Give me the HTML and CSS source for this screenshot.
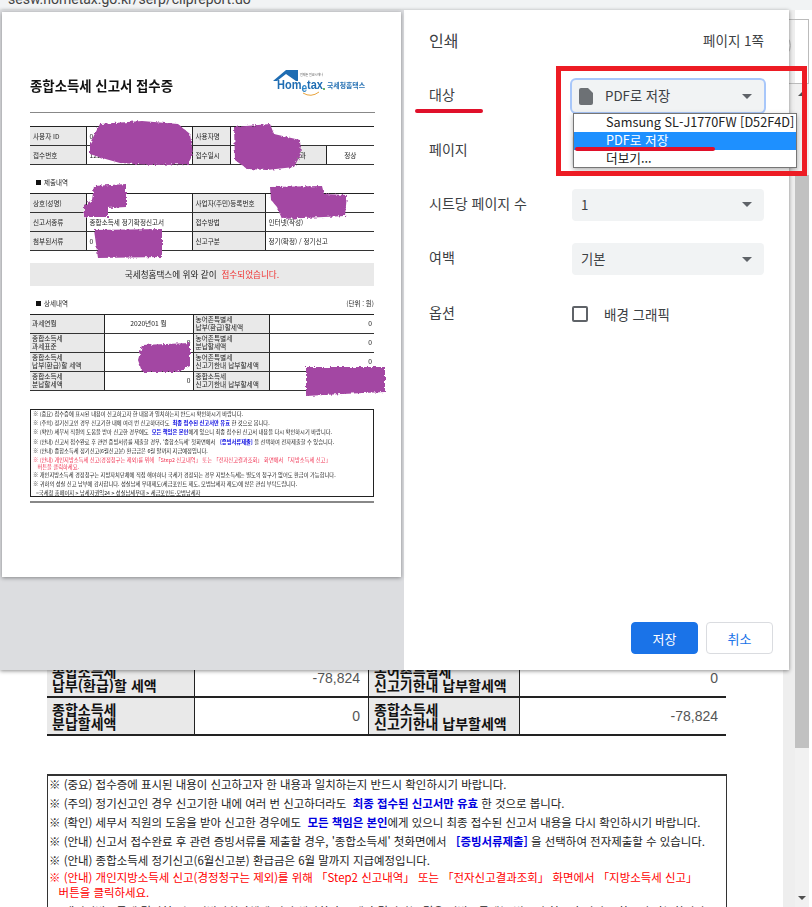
FILE: index.html
```html
<!DOCTYPE html>
<html lang="ko">

<head>
    <meta charset="UTF-8">
    <title>인쇄</title>
    <link rel="stylesheet" href="styles.css">
</head>

<body>
    <div class="app">
        <div class="topbar"><span class="url">sesw.hometax.go.kr/serp/clipreport.do</span></div>

        <div class="page">
            <div class="page-body">
                <table class="big-table">
                    <tr>
                        <th class="col-a">종합소득세<br>납부(환급)할 세액</th>
                        <td class="num col-b">-78,824</td>
                        <th class="col-c">농어촌특별세<br>신고기한내 납부할세액</th>
                        <td class="num col-d">0</td>
                    </tr>
                    <tr>
                        <th>종합소득세<br>분납할세액</th>
                        <td class="num">0</td>
                        <th>종합소득세<br>신고기한내 납부할세액</th>
                        <td class="num">-78,824</td>
                    </tr>
                </table>

                <div class="big-notice">
                    <p>※ (중요) 접수증에 표시된 내용이 신고하고자 한 내용과 일치하는지 반드시 확인하시기 바랍니다.</p>
                    <p>※ (주의) 정기신고인 경우 신고기한 내에 여러 번 신고하더라도 &nbsp;<b>최종 접수된 신고서만 유효</b> 한 것으로 봅니다.</p>
                    <p>※ (확인) 세무서 직원의 도움을 받아 신고한 경우에도 &nbsp;<b>모든 책임은 본인</b>에게 있으니 최종 접수된 신고서 내용을 다시 확인하시기 바랍니다.</p>
                    <p>※ (안내) 신고서 접수완료 후 관련 증빙서류를 제출할 경우, '종합소득세' 첫화면에서 &nbsp;&nbsp;<b>[증빙서류제출]</b> 을 선택하여 전자제출할 수 있습니다.</p>
                    <p>※ (안내) 종합소득세 정기신고(6월신고분) 환급금은 6월 말까지 지급예정입니다.</p>
                    <p class="warn">※ (안내) 개인지방소득세 신고(경정청구는 제외)를 위해 「Step2 신고내역」 또는 「전자신고결과조회」 화면에서 「지방소득세 신고」<br>&nbsp;&nbsp;&nbsp;버튼을 클릭하세요.</p>
                    <p>※ 개인지방소득세 경정청구는 지방자치단체에 직접 해야하나 국세가 경정되는 경우 지방소득세는 별도의 청구가 없어도 환급이 가능합니다.</p>
                </div>
            </div>
            <div class="gutter"></div>
            <div class="scroll-col">
                <div class="toolbox"><span class="round"></span></div>
                <div class="scrollbar">
                    <span class="arrow-up"></span>
                    <div class="thumb"></div>
                    <span class="arrow-down"></span>
                </div>
            </div>
        </div>

        <div class="dialog">
            <div class="preview">
                <div class="sheet">
                    <div class="sheet-inner">
                        <div class="sheet-head">
                            <h1>종합소득세 신고서 접수증</h1>
                            <svg class="logo" width="94" height="28" viewBox="0 0 94 28">
                                <path d="M0 12 L13 1 L25 1 L25 12 L23 12 L13 5 L4 12 Z" fill="#1f6db3"/>
                                <text x="4" y="20" class="logo-home" textLength="46" lengthAdjust="spacingAndGlyphs">Hom<tspan class="logo-e" dy="3">e</tspan><tspan dy="-3">tax</tspan></text>
                                <circle cx="51" cy="20" r="1" fill="#3a9a3a"/>
                                <path d="M30 24 Q38 29 46 23" fill="none" stroke="#e8a33c" stroke-width="1"/>
                                <text x="27" y="7" class="logo-tiny">언제든 필요시에나</text>
                                <text x="54" y="19" class="logo-kr" textLength="38" lengthAdjust="spacingAndGlyphs">국세청홈택스</text>
                            </svg>
                        </div>
                        <div class="rule"></div>

                        <table class="sheet-table info-one">
                            <tr>
                                <th class="w56">사용자 ID</th>
                                <td class="w106">0</td>
                                <th class="w38">사용자명</th>
                                <td colspan="3"></td>
                            </tr>
                            <tr>
                                <th>접수번호</th>
                                <td>121</td>
                                <th>접수일시</th>
                                <td class="end w76">9</td>
                                <th class="w39">접수결과</th>
                                <td class="mid">정상</td>
                            </tr>
                        </table>

                        <div class="section-title"><i class="square"></i>제출내역</div>
                        <table class="sheet-table info-two">
                            <tr>
                                <th class="w56">상호(성명)</th>
                                <td class="w106"></td>
                                <th class="w73">사업자(주민)등록번호</th>
                                <td></td>
                            </tr>
                            <tr>
                                <th>신고서종류</th>
                                <td>종합소득세 정기확정신고서</td>
                                <th>접수방법</th>
                                <td>인터넷(작성)</td>
                            </tr>
                            <tr>
                                <th>첨부된서류</th>
                                <td>0</td>
                                <th>신고구분</th>
                                <td>정기(확정) / 정기신고</td>
                            </tr>
                        </table>

                        <div class="banner">국세청홈택스에 위와 같이 &nbsp;<span>접수되었습니다.</span></div>

                        <div class="section-row">
                            <div class="section-title"><i class="square"></i>상세내역</div>
                            <div class="unit">(단위 : 원)</div>
                        </div>
                        <table class="sheet-table detail">
                            <tr>
                                <th class="w74">과세연월</th>
                                <td class="mid w89">2020년01 월</td>
                                <th class="w76">농어촌특별세<br>납부(환급)할세액</th>
                                <td class="end">0</td>
                            </tr>
                            <tr>
                                <th>종합소득세<br>과세표준</th>
                                <td class="end">0</td>
                                <th>농어촌특별세<br>분납할세액</th>
                                <td class="end">0</td>
                            </tr>
                            <tr>
                                <th>종합소득세<br>납부(환급)할 세액</th>
                                <td class="end"></td>
                                <th>농어촌특별세<br>신고기한내 납부할세액</th>
                                <td class="end">0</td>
                            </tr>
                            <tr>
                                <th>종합소득세<br>분납할세액</th>
                                <td class="end">0</td>
                                <th>종합소득세<br>신고기한내 납부할세액</th>
                                <td class="end"></td>
                            </tr>
                        </table>

                        <div class="notice">
                            <p>※ (중요) 접수증에 표시된 내용이 신고하고자 한 내용과 일치하는지 반드시 확인하시기 바랍니다.</p>
                            <p>※ (주의) 정기신고인 경우 신고기한 내에 여러 번 신고하더라도 &nbsp;<b>최종 접수된 신고서만 유효</b> 한 것으로 봅니다.</p>
                            <p>※ (확인) 세무서 직원의 도움을 받아 신고한 경우에도 &nbsp;<b>모든 책임은 본인</b>에게 있으니 최종 접수된 신고서 내용을 다시 확인하시기 바랍니다.</p>
                            <p>※ (안내) 신고서 접수완료 후 관련 증빙서류를 제출할 경우, '종합소득세' 첫화면에서 &nbsp;&nbsp;<b>[증빙서류제출]</b> 을 선택하여 전자제출할 수 있습니다.</p>
                            <p>※ (안내) 종합소득세 정기신고(6월신고분) 환급금은 6월 말까지 지급예정입니다.</p>
                            <p class="warn">※ (안내) 개인지방소득세 신고(경정청구는 제외)를 위해 「Step2 신고내역」 또는 「전자신고결과조회」 화면에서 「지방소득세 신고」<br>&nbsp;&nbsp;&nbsp;버튼을 클릭하세요.</p>
                            <p>※ 개인지방소득세 경정청구는 지방자치단체에 직접 해야하나 국세가 경정되는 경우 지방소득세는 별도의 청구가 없어도 환급이 가능합니다.</p>
                            <p>※ 귀하의 성실 신고 납부에 감사합니다. 성실납세 우대제도(세금포인트 제도, 모범납세자 제도)에 많은 관심 부탁드립니다.</p>
                            <p>&nbsp;&nbsp;=국세청 홈페이지 &gt; 납세자권익24 &gt; 성실납세우대 &gt; 세금포인트·모범납세자</p>
                        </div>
                        <div class="rule bottom-rule"></div>
                    </div>

                    <!-- masked personal data -->
                    <svg class="scribbles" width="399" height="565" viewBox="0 0 399 565">
                        <defs>
                            <filter id="rough" x="-5%" y="-5%" width="110%" height="110%">
                                <feTurbulence type="fractalNoise" baseFrequency="0.35" numOctaves="2" seed="4"/>
                                <feDisplacementMap in="SourceGraphic" scale="4"/>
                            </filter>
                        </defs>
                        <g fill="#a347a3" filter="url(#rough)">
                            <path d="M88 131 L98 112 L140 109 L176 112 L188 122 L191 142 L186 152 L150 153 L118 151 L100 146 L88 142 Z"/>
                            <path d="M232 115 L268 112 L272 122 L298 128 L299 142 L292 155 L265 158 L245 157 L233 148 Z"/>
                            <path d="M92 174 L124 172 L124 195 L106 196 L106 205 L82 205 L82 193 L90 188 Z"/>
                            <path d="M268 175 L320 174 L322 182 L345 183 L343 204 L280 207 L275 195 L269 188 Z"/>
                            <path d="M92 218 L160 217 L160 245 L96 246 Z"/>
                            <path d="M140 333 L188 331 L188 354 L176 360 L140 360 L136 348 Z"/>
                            <path d="M304 355 L383 355 L383 380 L340 382 L304 384 Z"/>
                        </g>
                    </svg>
                </div>
            </div>

            <div class="panel">
                <div class="panel-head">
                    <div class="panel-title">인쇄</div>
                    <div class="page-count">페이지 1쪽</div>
                </div>
                <div class="form-row">
                    <div class="form-label">대상</div>
                    <div class="select focused">
                        <svg class="file-icon" width="14" height="17" viewBox="0 0 14 17">
                            <path d="M2 0 H9 L14 5 V15 Q14 17 12 17 H2 Q0 17 0 15 V2 Q0 0 2 0 Z" fill="#6d7175"/>
                        </svg>
                        <span>PDF로 저장</span>
                        <i class="caret"></i>
                    </div>
                </div>
                <div class="form-row">
                    <div class="form-label">페이지</div>
                    <div class="select"><span>전체</span><i class="caret"></i></div>
                </div>
                <div class="form-row">
                    <div class="form-label">시트당 페이지 수</div>
                    <div class="select"><span>1</span><i class="caret"></i></div>
                </div>
                <div class="form-row">
                    <div class="form-label">여백</div>
                    <div class="select"><span>기본</span><i class="caret"></i></div>
                </div>
                <div class="form-row">
                    <div class="form-label">옵션</div>
                    <label class="check"><i class="box"></i>배경 그래픽</label>
                </div>
                <div class="panel-foot">
                    <button class="btn primary">저장</button>
                    <button class="btn">취소</button>
                </div>
            </div>
        </div>

        <ul class="select-popup">
            <li>Samsung SL-J1770FW [D52F4D]</li>
            <li class="active">PDF로 저장</li>
            <li>더보기...</li>
        </ul>

        <div class="mark-frame"></div>
        <div class="mark-line line-target"></div>
        <div class="mark-line line-pdf"></div>
    </div>
</body>

</html>
```

FILE: styles.css
```css
* {
    box-sizing: border-box;
}

body {
    margin: 0;
    background-color: #fff;
    font-family: 'Noto Sans CJK KR', 'Noto Sans', sans-serif;
    color: #3c4043;
}

.app {
    position: relative;
    width: 812px;
    height: 907px;
    overflow: hidden;
    background-color: #fff;
}

.topbar {
    height: 10px;
    background-color: #f1f3f4;
    padding-left: 8px;
    overflow: hidden;
}

.url {
    display: block;
    margin-top: -11px;
    font-family: Roboto, sans-serif;
    font-size: 14px;
    line-height: 20px;
    color: #444;
}

/* page behind the dialog */
.page {
    display: flex;
    height: 897px;
}

.page-body {
    width: 783px;
    padding: 650px 0 0 47px;
    overflow: hidden;
}

.gutter {
    width: 12px;
    background-color: #eee;
}

.scroll-col {
    width: 17px;
    display: flex;
    flex-direction: column;
}

.toolbox {
    height: 65px;
    margin-top: 9px;
    border: 1px solid #bbb;
    position: relative;
    overflow: hidden;
    margin-left: -20px;
    margin-right: 3px;
}

.round {
    position: absolute;
    left: -10px;
    top: 13px;
    width: 25px;
    height: 25px;
    border: 1px solid #bbb;
    border-radius: 50%;
}

.scrollbar {
    position: relative;
    flex: 1;
    width: 14px;
    background-color: #f1f1f1;
    padding-top: 91px;
}

.thumb {
    height: 573px;
    background-color: #c1c1c1;
}

.arrow-up,
.arrow-down {
    position: absolute;
    left: 3px;
    border-left: 4px solid transparent;
    border-right: 4px solid transparent;
}

.arrow-up {
    top: 8px;
    border-bottom: 4px solid #505050;
}

.arrow-down {
    bottom: 7px;
    border-top: 4px solid #505050;
}

.big-table {
    width: 679px;
    border-collapse: separate;
    border-spacing: 0;
    table-layout: fixed;
    color: #111;
}

.big-table th,
.big-table td {
    height: 38px;
    padding: 0 5px;
    border-left: 1px solid #222;
    border-bottom: 2px solid #222;
    font-size: 14px;
    line-height: 14px;
}

.big-table th {
    background-color: #e9e9e9;
    text-align: left;
    font-weight: 700;
}

.big-table tr th:first-child {
    border-left: 0;
}

.col-a { width: 147px; }
.col-b { width: 174px; }
.col-c { width: 151px; }
.col-d { width: 207px; }

.big-table td {
    font-family: 'Liberation Sans', sans-serif;
    font-size: 14px;
    color: #555;
    padding-right: 8px;
}

.num {
    text-align: right;
}

.big-notice {
    width: 680px;
    margin-top: 38px;
    padding: 0 0 0 1px;
    border: 1px solid #333;
    border-top-width: 2px;
    font-size: 11.45px;
    color: #222;
    height: 200px;
}

.big-notice p {
    margin: 0;
    height: 19px;
    line-height: 16px;
    white-space: nowrap;
}

.big-notice b,
.notice b {
    color: #0000e0;
}

.big-notice .warn {
    height: 34px;
    margin-top: -2px;
    color: #f00;
    line-height: 15px;
    padding-top: 1px;
}

/* print dialog */
.dialog {
    position: absolute;
    left: 0;
    top: 10px;
    width: 789px;
    height: 660px;
    display: flex;
    background-color: #fff;
    box-shadow: 0 1px 4px rgba(0, 0, 0, 0.45);
}

.preview {
    width: 404px;
    padding: 2px;
    background-color: #dcdde0;
}

.sheet {
    position: relative;
    width: 399px;
    height: 565px;
    background-color: #fff;
    box-shadow: 0 1px 4px rgba(0, 0, 0, 0.4);
}

.sheet-inner {
    padding: 54px 26px 0 28px;
    color: #222;
    filter: blur(0.3px);
}

.scribbles {
    position: absolute;
    left: 0;
    top: 0;
    overflow: visible;
    pointer-events: none;
}

.sheet-head {
    display: flex;
    justify-content: space-between;
    align-items: flex-start;
    height: 46px;
}

.sheet-head h1 {
    margin: 10px 0 0;
    font-size: 13.4px;
    line-height: 18px;
    font-weight: 700;
    color: #111;
}

.logo {
    margin: 3px 8px 0 0;
}

.logo-home {
    font-family: 'Liberation Sans', sans-serif;
    font-size: 13px;
    font-weight: 700;
    fill: #1f6db3;
}

.logo-e {
    font-size: 12px;
    fill: #2e86c9;
}

.logo-tiny {
    font-size: 3px;
    fill: #555;
}

.logo-kr {
    font-size: 7px;
    font-weight: 700;
    fill: #2b74b5;
}

.rule {
    height: 1px;
    background-color: #888;
}

.sheet-table {
    width: 344px;
    border-collapse: collapse;
    table-layout: fixed;
    border-top: 1px solid #222;
}

.sheet-table th,
.sheet-table td {
    height: 19px;
    padding: 0 3px;
    border-left: 1px solid #222;
    border-bottom: 1px solid #333;
    font-size: 6.6px;
    line-height: 7px;
    font-weight: 400;
    white-space: nowrap;
}

.sheet-table th {
    background-color: #e9e9e9;
    text-align: left;
}

.sheet-table tr th:first-child {
    border-left: 0;
}

.info-one {
    margin-top: 13px;
}

.section-title {
    display: flex;
    align-items: center;
    height: 12px;
    margin-left: 6px;
    font-size: 6.5px;
}

.square {
    width: 5px;
    height: 5px;
    margin-right: 3px;
    background-color: #111;
}

.info-one + .section-title {
    margin-top: 11px;
}

.section-title + .info-two {
    margin-top: 5px;
}

.w56 { width: 56px; }
.w106 { width: 106px; }
.w38 { width: 38px; }
.w39 { width: 39px; }
.w73 { width: 73px; }
.w74 { width: 74px; }
.w76 { width: 76px; }
.w89 { width: 89px; }

.mid {
    text-align: center;
}

.end {
    text-align: right;
}

.banner {
    width: 344px;
    height: 23px;
    margin-top: 12px;
    background-color: #e9e9e9;
    font-size: 8.6px;
    line-height: 23px;
    text-align: center;
}

.banner span {
    color: #f03030;
}

.section-row {
    display: flex;
    justify-content: space-between;
    align-items: center;
    width: 344px;
    margin-top: 11px;
    height: 12px;
    font-size: 6.5px;
}

.detail {
    margin-top: 5px;
}

.detail th,
.detail td {
    padding: 0 2px;
    font-size: 6.7px;
    line-height: 7.6px;
}

.notice {
    width: 344px;
    height: 88px;
    margin-top: 18px;
    padding: 0 0 0 2px;
    border: 1px solid #222;
    font-size: 5.25px;
    white-space: nowrap;
}

.notice p {
    margin: 0;
    height: 9.2px;
    line-height: 9.2px;
}

.notice .warn {
    height: 15px;
    line-height: 7px;
    color: #f03050;
    padding-top: 1px;
}

.bottom-rule {
    width: 344px;
    height: 2px;
    margin-top: 4px;
}

.panel {
    flex: 1;
    display: flex;
    flex-direction: column;
    padding: 0 16px 16px 25px;
    font-size: 13px;
}

.panel-head {
    display: flex;
    justify-content: space-between;
    align-items: center;
    height: 59px;
    padding-right: 9px;
    padding-top: 1px;
}

.panel-title {
    font-size: 16px;
}

.page-count {
    font-size: 13.5px;
}

.form-row {
    display: flex;
    align-items: center;
    height: 54.4px;
}

.form-label {
    width: 143px;
    padding-bottom: 4px;
    font-size: 14px;
}

.select {
    display: flex;
    align-items: center;
    width: 192px;
    height: 32px;
    padding: 0 9px;
    background-color: #f1f3f4;
    border-radius: 4px;
    position: relative;
    font-size: 13.3px;
}

.select span {
    margin-top: -1px;
}

.select.focused {
    box-shadow: 0 0 0 2px #a8c7fa;
    border-radius: 4px;
}

.file-icon {
    margin: 0 12px 0 -2px;
}

.caret {
    margin-left: auto;
    margin-right: 3px;
    border-top: 5px solid #5f6368;
    border-left: 5px solid transparent;
    border-right: 5px solid transparent;
}

.check {
    display: flex;
    align-items: center;
    font-size: 13.5px;
}

.box {
    width: 16px;
    height: 16px;
    margin-right: 16px;
    border: 2px solid #5f6368;
    border-radius: 2px;
}

.panel-foot {
    display: flex;
    justify-content: flex-end;
    gap: 8px;
    margin-top: auto;
}

.btn {
    width: 67px;
    height: 32px;
    padding: 0;
    background-color: #fff;
    border: 1px solid #dadce0;
    border-radius: 4px;
    color: #1a73e8;
    font-family: inherit;
    font-size: 13px;
}

.btn.primary {
    background-color: #1a73e8;
    border-color: #1a73e8;
    color: #fff;
}

/* native select list, hand drawn marks on top */
.select-popup {
    position: absolute;
    left: 573px;
    top: 113px;
    width: 224px;
    height: 55px;
    margin: 0;
    padding: 0;
    list-style: none;
    background-color: #fff;
    border: 1px solid #767676;
    box-shadow: 0 2px 5px rgba(0, 0, 0, 0.3);
    font-size: 12.7px;
}

.select-popup li {
    height: 18px;
    padding-left: 32px;
    line-height: 16px;
    white-space: nowrap;
    color: #222;
}

.select-popup .active {
    background-color: #1e90ff;
    color: #fff;
}

.mark-frame {
    position: absolute;
    left: 556px;
    top: 66px;
    width: 251px;
    height: 110px;
    border: 5px solid #ed1c24;
}

.mark-line {
    position: absolute;
    height: 4px;
    border-radius: 2px;
    background-color: #e0102a;
}

.line-target {
    left: 415px;
    top: 109px;
    width: 68px;
}

.line-pdf {
    left: 575px;
    top: 147px;
    width: 140px;
}
```
